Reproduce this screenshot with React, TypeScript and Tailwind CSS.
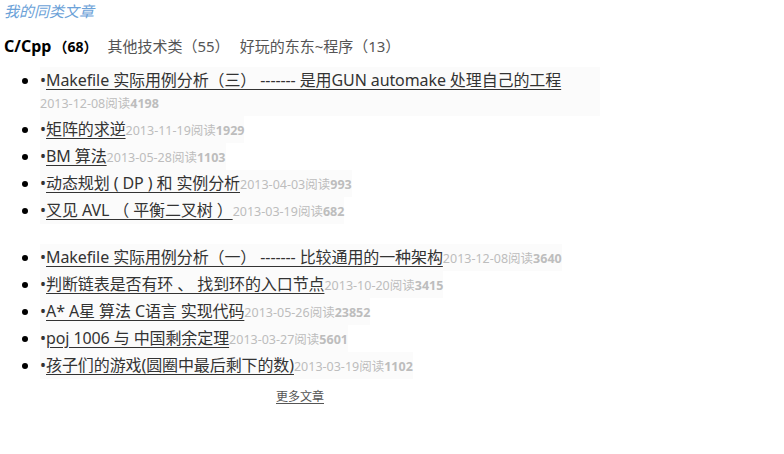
import React from 'react';

type Article = { title: string; date: string; reads: string };

const groupA: Article[] = [
    { title: 'Makefile 实际用例分析（三） ------- 是用GUN automake 处理自己的工程', date: '2013-12-08', reads: '4198' },
    { title: '矩阵的求逆', date: '2013-11-19', reads: '1929' },
    { title: 'BM 算法', date: '2013-05-28', reads: '1103' },
    { title: '动态规划 ( DP ) 和 实例分析', date: '2013-04-03', reads: '993' },
    { title: '叉见 AVL （ 平衡二叉树 ）', date: '2013-03-19', reads: '682' },
];

const groupB: Article[] = [
    { title: 'Makefile 实际用例分析（一） ------- 比较通用的一种架构', date: '2013-12-08', reads: '3640' },
    { title: '判断链表是否有环 、 找到环的入口节点', date: '2013-10-20', reads: '3415' },
    { title: 'A* A星 算法 C语言 实现代码', date: '2013-05-26', reads: '23852' },
    { title: 'poj 1006 与 中国剩余定理', date: '2013-03-27', reads: '5601' },
    { title: '孩子们的游戏(圆圈中最后剩下的数)', date: '2013-03-19', reads: '1102' },
];

function ArticleList({ items, className }: { items: Article[]; className?: string }) {
    return (
        <ul className={`list-disc pl-[40px] ${className ?? ''}`}>
            {items.map((item) => (
                <li key={item.title} className="w-fit bg-[#fbfbfb] py-[1.5px] leading-[22px]">
                    <span className="text-[16px] text-[#333]">•</span>
                    <a href="#" className="text-[16px] tracking-[-0.1px] text-[#333] underline underline-offset-[3px]">{item.title}</a>
                    <span className="whitespace-nowrap align-baseline text-[12.5px] text-[#bdbdbd]">
                        {item.date}阅读<b className="font-bold">{item.reads}</b>
                    </span>
                </li>
            ))}
        </ul>
    );
}

export default function App() {
    return (
        <div
            className="w-[600px] bg-white"
            style={{ fontFamily: '"Noto Sans", "Noto Sans CJK SC", sans-serif' }}
        >
            <div className="h-[22px] pl-[4px] text-[15px] italic leading-[22px] text-[#6ca2d8]">我的同类文章</div>
            <div className="mt-[12px] flex items-baseline gap-[10px] pl-[4px] leading-[24px]">
                <span className="text-[16px] font-bold text-black">
                    C/Cpp<span className="ml-[2px] text-[14px]">（68）</span>
                </span>
                <span className="text-[15px] text-[#555]">其他技术类（55）</span>
                <span className="text-[15px] text-[#555]">好玩的东东~程序（13）</span>
            </div>
            <ArticleList items={groupA} className="mt-[8px]" />
            <ArticleList items={groupB} className="mt-[20px]" />
            <div className="mt-[9px] text-center text-[12px]">
                <a href="#" className="text-[#555] underline underline-offset-2">更多文章</a>
            </div>
        </div>
    );
}
